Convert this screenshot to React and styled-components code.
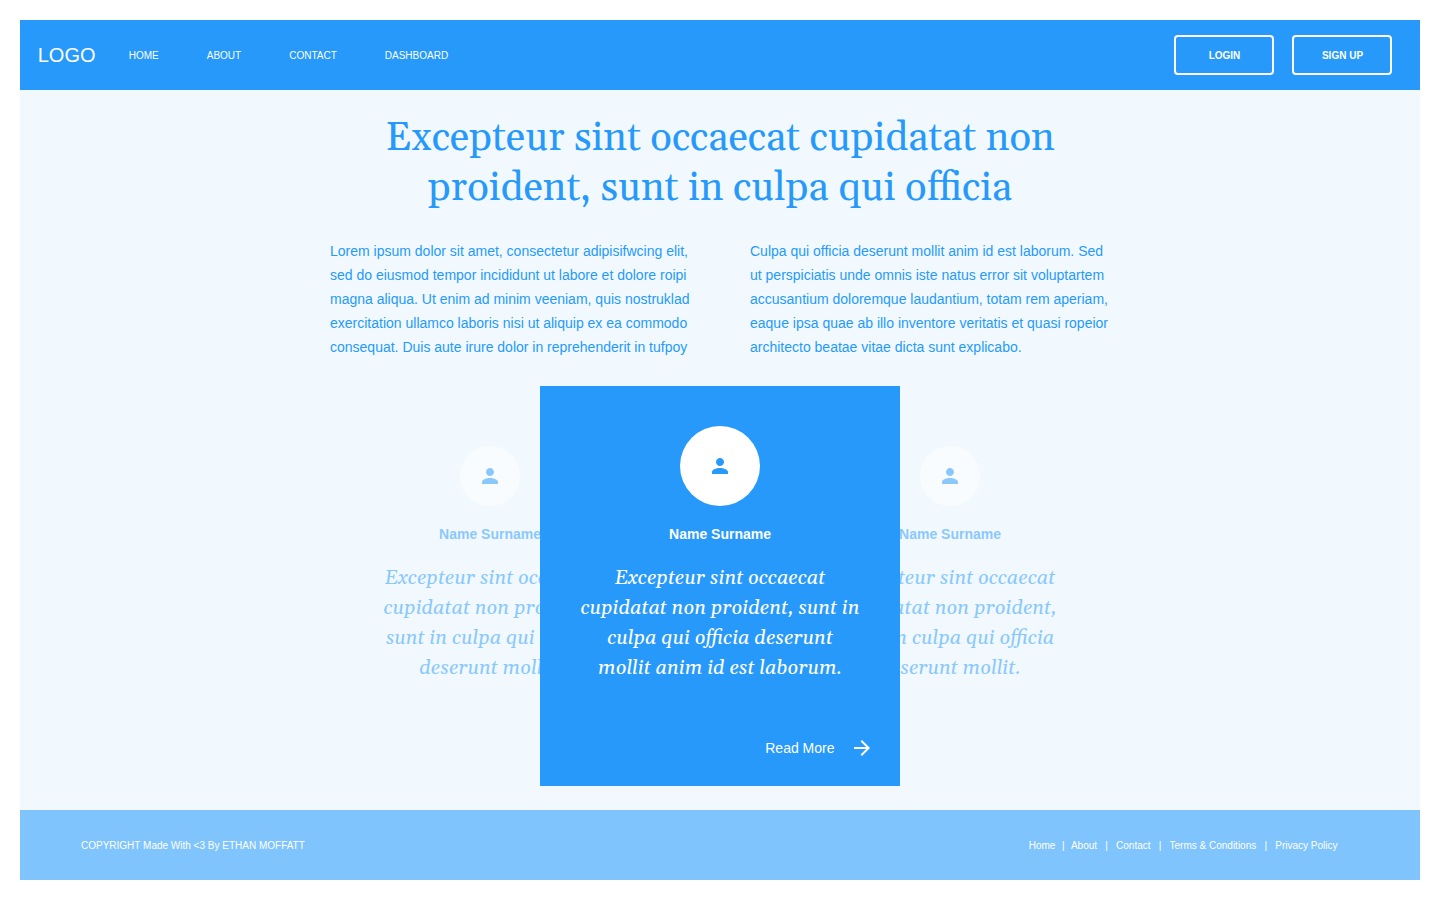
import React from 'react';
import styled, { createGlobalStyle, css } from 'styled-components';

const sans = '"Liberation Sans", Arial, sans-serif';
const serif = 'Georgia, Gelasio, "Liberation Serif", serif';
const blue = '#2699fb';

const GlobalStyle = createGlobalStyle`
  * { box-sizing: border-box; }
  body { margin: 0; background: #fff; font-family: ${sans}; }
  h1, h2, p { margin: 0; }
`;

const Page = styled.div`
  display: flex;
  flex-direction: column;
  height: 900px;
  padding: 20px;
`;

const Header = styled.header`
  display: flex;
  align-items: center;
  flex: none;
  height: 70px;
  padding: 0 28px 0 17.75px;
  background: ${blue};
  color: #fff;
`;

const Logo = styled.div`
  width: 91px;
  font-size: 20px;
  line-height: 24px;
`;

const Nav = styled.nav`
  display: flex;
  gap: 48px;
  flex: 1;
`;

const NavLink = styled.a`
  font-size: 10px;
  line-height: 12px;
  padding-top: 1px;
`;

const Actions = styled.div`
  display: flex;
  gap: 18px;
`;

const OutlineButton = styled.button`
  width: 100px;
  height: 40px;
  padding: 1px 0 0 1px;
  border: 2px solid #fff;
  border-radius: 4px;
  background: transparent;
  color: #fff;
  font: bold 10px/12px ${sans};
`;

const Main = styled.main`
  display: flex;
  flex-direction: column;
  align-items: center;
  flex: none;
  height: 720px;
  padding-top: 24px;
  background: #f1f9ff;
  color: ${blue};
`;

const Title = styled.h1`
  font: normal 40px/50px ${serif};
  text-align: center;
  white-space: nowrap;
`;

const Columns = styled.div`
  display: flex;
  gap: 60px;
  margin-top: 25px;
`;

const Paragraph = styled.p`
  width: 360px;
  font-size: 14px;
  line-height: 24px;
  white-space: nowrap;
`;

const Line = styled.span`
  display: block;
`;

const Testimonials = styled.section`
  display: flex;
  align-items: flex-start;
  margin-top: 27px;
`;

const Avatar = styled.div`
  display: flex;
  align-items: center;
  justify-content: center;
  width: ${(p) => p.$size}px;
  height: ${(p) => p.$size}px;
  border-radius: 50%;
  background: #fff;
  color: ${blue};
`;

const Name = styled.h2`
  margin-top: 16px;
  font: bold 14px/24px ${sans};
`;

const Quote = styled.p`
  margin-top: 17px;
  font: italic 20px/30px ${serif};
  text-align: center;
  white-space: nowrap;
`;

const Card = styled.article`
  display: flex;
  flex-direction: column;
  align-items: center;
  flex: none;
  ${(p) =>
    p.$featured
      ? css`
          z-index: 1;
          width: 360px;
          height: 400px;
          margin: 0 -100px;
          padding-top: 40px;
          background: ${blue};
          color: #fff;
        `
      : css`
          width: 300px;
          padding-top: 60px;
          opacity: 0.5;
        `}
`;

const ReadMore = styled.a`
  display: flex;
  align-items: center;
  align-self: flex-end;
  gap: 15.5px;
  margin: 53px 26px 0 0;
  font-size: 14px;
  line-height: 24px;
`;

const Icon = styled.svg`
  display: block;
  width: 24px;
  height: 24px;
  fill: currentColor;
`;

const Footer = styled.footer`
  display: flex;
  align-items: center;
  justify-content: space-between;
  flex: none;
  height: 70px;
  padding: 2px 82.5px 0 61px;
  background: #7fc4fd;
  color: #fff;
  font-size: 10px;
  line-height: 12px;
`;

const FooterLinks = styled.div`
  display: flex;
`;

const Separator = styled.span`
  width: ${(p) => p.$width || 19}px;
  text-align: center;
`;

const Lines = ({ items }) => items.map((t) => <Line key={t}>{t}</Line>);

const Person = () => (
  <Icon viewBox="0 0 24 24">
    <path d="M12 12c2.21 0 4-1.79 4-4s-1.79-4-4-4-4 1.79-4 4 1.79 4 4 4zm0 2c-2.67 0-8 1.34-8 4v2h16v-2c0-2.66-5.33-4-8-4z" />
  </Icon>
);

const Testimonial = ({ featured, lines }) => (
  <Card $featured={featured}>
    <Avatar $size={featured ? 80 : 60}>
      <Person />
    </Avatar>
    <Name>Name Surname</Name>
    <Quote>
      <Lines items={lines} />
    </Quote>
    {featured && (
      <ReadMore>
        Read More
        <Icon viewBox="0 0 24 24">
          <path d="M12 4l-1.41 1.41L16.17 11H4v2h12.17l-5.58 5.59L12 20l8-8z" />
        </Icon>
      </ReadMore>
    )}
  </Card>
);

const sideQuote = ['Excepteur sint occaecat', 'cupidatat non proident,', 'sunt in culpa qui officia', 'deserunt mollit.'];

export default function App() {
  return (
    <>
      <GlobalStyle />
      <Page>
        <Header>
          <Logo>LOGO</Logo>
          <Nav>
            {['HOME', 'ABOUT', 'CONTACT', 'DASHBOARD'].map((t) => (
              <NavLink key={t}>{t}</NavLink>
            ))}
          </Nav>
          <Actions>
            <OutlineButton>LOGIN</OutlineButton>
            <OutlineButton>SIGN UP</OutlineButton>
          </Actions>
        </Header>
        <Main>
          <Title>
            <Lines items={['Excepteur sint occaecat cupidatat non', 'proident, sunt in culpa qui officia']} />
          </Title>
          <Columns>
            <Paragraph>
              <Lines
                items={[
                  'Lorem ipsum dolor sit amet, consectetur adipisifwcing elit,',
                  'sed do eiusmod tempor incididunt ut labore et dolore roipi',
                  'magna aliqua. Ut enim ad minim veeniam, quis nostruklad',
                  'exercitation ullamco laboris nisi ut aliquip ex ea commodo',
                  'consequat. Duis aute irure dolor in reprehenderit in tufpoy',
                ]}
              />
            </Paragraph>
            <Paragraph>
              <Lines
                items={[
                  'Culpa qui officia deserunt mollit anim id est laborum. Sed',
                  'ut perspiciatis unde omnis iste natus error sit voluptartem',
                  'accusantium doloremque laudantium, totam rem aperiam,',
                  'eaque ipsa quae ab illo inventore veritatis et quasi ropeior',
                  'architecto beatae vitae dicta sunt explicabo.',
                ]}
              />
            </Paragraph>
          </Columns>
          <Testimonials>
            <Testimonial lines={sideQuote} />
            <Testimonial
              featured
              lines={[
                'Excepteur sint occaecat',
                'cupidatat non proident, sunt in',
                'culpa qui officia deserunt',
                'mollit anim id est laborum.',
              ]}
            />
            <Testimonial lines={sideQuote} />
          </Testimonials>
        </Main>
        <Footer>
          <span>COPYRIGHT Made With &lt;3 By ETHAN MOFFATT</span>
          <FooterLinks>
            <a>Home</a>
            <Separator $width={15.5}>|</Separator>
            <a>About</a>
            <Separator>|</Separator>
            <a>Contact</a>
            <Separator>|</Separator>
            <a>Terms &amp; Conditions</a>
            <Separator>|</Separator>
            <a>Privacy Policy</a>
          </FooterLinks>
        </Footer>
      </Page>
    </>
  );
}
